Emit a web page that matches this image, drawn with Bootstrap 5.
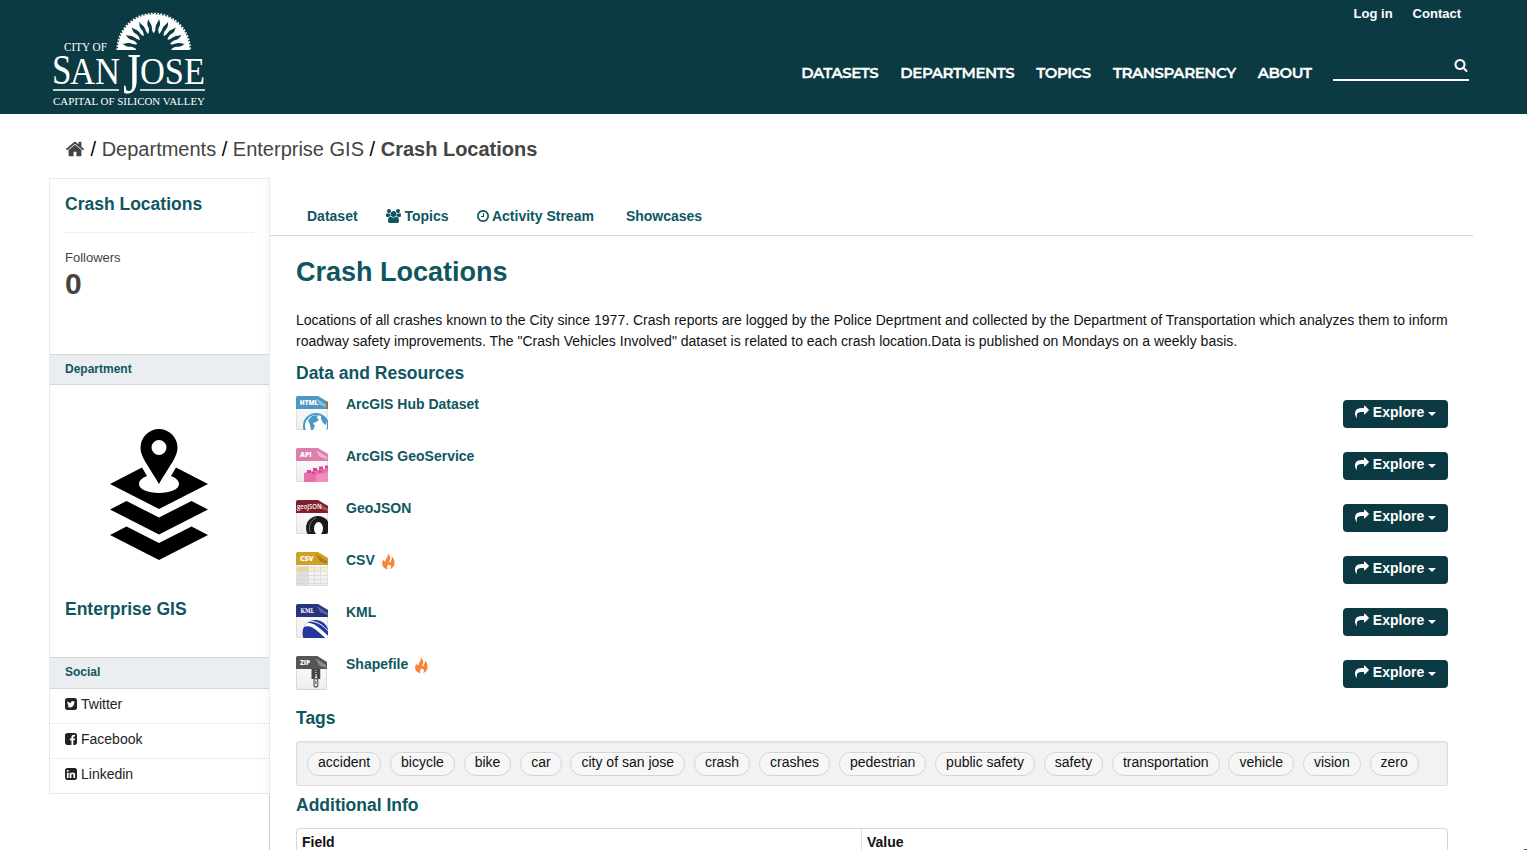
<!DOCTYPE html>
<html lang="en">
<head>
<meta charset="utf-8">
<title>Crash Locations - City of San Jose</title>
<link href="https://cdn.jsdelivr.net/npm/bootstrap@5.3.0/dist/css/bootstrap.min.css" rel="stylesheet">
<style>
:root{--deep:#0b3a42;--teal:#0f5661;--edge:#d5d5d5}
body{font-family:"Liberation Sans",Arial,sans-serif;font-size:14px;line-height:21px;color:#111;height:850px;overflow:hidden;background:#fff}
a{color:inherit;text-decoration:none}
.fa{height:1em;width:auto;fill:currentColor;vertical-align:-.13em}
.masthead{background:var(--deep);height:114px;color:#fff}
.wrap{width:1424px;margin-left:49px}
.logo{margin:8px 0 0 3px}
.account{font-size:13px;line-height:16px;font-weight:700;gap:20px;padding:6px 12px 0 0}
.mainnav{font-family:Montserrat,Inter,sans-serif;font-weight:600;font-size:15px;line-height:20px;gap:22px;margin-top:41px;padding-right:4px;letter-spacing:-.43px;-webkit-text-stroke:.3px #fff}
.searchline{width:136px;height:22px;border-bottom:2px solid #fff;font-size:15px;line-height:15px;margin:-4px 0 0 -.5px;padding-right:1px}
.searchline .fa{height:14px;display:block;margin:-1px 0 0 auto}
.crumbs{font-size:20px;line-height:28px;padding:21px 0 0 16px;height:64px;color:#000}
.crumbs a{color:#444}
.side{width:221px}
.sidecard{border:1px solid #eaeaea;height:616px;background:linear-gradient(90deg,#fff 210px,#fafafa)}
.h-teal{color:var(--teal);font-weight:700;font-size:17.5px;line-height:22px;margin:0}
.sidehead{background:#eaeef1;border-top:1px solid var(--edge);border-bottom:1px solid var(--edge);color:var(--teal);font-size:12px;font-weight:700;line-height:16px;padding:6px 15px 0}
.social{height:35px;padding:5px 15px;color:#222;border-bottom:1px dotted #ddd}
.tabs{height:58px;border-bottom:1px solid var(--edge);color:var(--teal);font-weight:700;padding:28px 0 0 37px}
.inner{padding:0 25px 0 26px}
.res{height:52px}
.res .title{font-weight:700;color:var(--teal);margin-left:18px;line-height:20px;margin-top:-1px}
.pic{margin-top:1px;font-family:"Open Sans",sans-serif;font-weight:800}
.explore{background:var(--deep);color:#fff;font-weight:700;font-size:14px;line-height:20px;width:105px;height:28px;padding:2px 0 0;border:0;border-radius:4px;margin-top:5px}
.explore:hover{background:var(--deep);color:#fff}
.caret{display:inline-block;border:4px solid transparent;border-top-color:#fff;border-bottom:0;vertical-align:1px}
.tagbox{height:45px;background:#f2f2f2;border:1px solid #dcdcdc;border-radius:3px;padding:10px;gap:8.85px;box-shadow:inset 0 1px 2px rgba(0,0,0,.05)}
.tagpill{height:24px;line-height:19px;border:1px solid #d4d4d4;border-radius:12px;padding:0 10px;background:#f6f6f6;box-shadow:inset 0 1px 0 #fff}
.info{height:60px;border:1px solid var(--edge);border-radius:4px;font-weight:700;margin-top:12px}
.info>div{padding:3px 5px}
.corner{position:absolute;right:0;bottom:0;width:4px;height:1px;background:linear-gradient(90deg,#ccc,#222)}
</style>
</head>
<body>
<svg width="0" height="0" class="position-absolute">
<defs>
<symbol id="share" viewBox="0 0 1792 1792"><path d="M1792 640q0 26-19 45l-512 512q-19 19-45 19t-45-19-19-45v-256h-224q-98 0-175.500 6t-154 21.500-133 42.500-105.500 69.500-80 101-48.500 138.500-17.500 181q0 55 5 123 0 6 2.500 23.500t2.500 26.500q0 15-8.500 25t-23.500 10q-16 0-28-17-7-9-13-22t-13.500-30-10.500-24q-127-285-127-451 0-199 53-333 162-403 875-403h224v-256q0-26 19-45t45-19 45 19l512 512q19 19 19 45z"/></symbol>
<symbol id="flame" viewBox="0 0 14 17"><path fill="#f9843a" d="M6 0c2.600 1.800 3.700 4.500 2.300 7.300-.5 1-.4 2 .3 2.100 1 .1 1.300-1.200.8-2.600 1.100.5 1.500-1.300 1.200-3.600C13 5.500 14 8.500 13.400 11.500c-.5 2.600-2.400 4.600-4.900 5.200 1.300-1.300 1.500-2.900.6-4.500-.8.5-1.500.4-1.700-.8-1.700 1.500-2.500 3.500-1.300 5.400C3 16.600.6 14.600.2 11.700-.1 9.400.7 7.600 2 6c-.2 1.400.2 2.300 1 2.300C4 8.300 3.800 7 4.500 5.600 5.500 3.600 6.900 2.400 6 0z"/></symbol>
<path id="ray" d="M-2.800-16.500C-2-19.500-.6-21-1.700-24-2.600-26.500-2.300-28.500-.3-32-.4-29 1.700-27.500 1.800-24.500 1.900-21.500 1-20 2.800-16.500z"/>
<linearGradient id="paper" x1="0" y1="0" x2="0" y2="1"><stop offset="0" stop-color="#fff"/><stop offset="1" stop-color="#eee"/></linearGradient>
<clipPath id="sheet"><path d="M0 2q0-2 2-2h20l10 6v26q0 2-2 2H2q-2 0-2-2z"/></clipPath>
<clipPath id="globe"><circle cx="19.500" cy="29" r="13"/></clipPath>
</defs>
</svg>

<header class="masthead">
 <div class="wrap d-flex justify-content-between">
  <a href="#" class="logo"><svg width="156" height="100" viewBox="52 8 156 100" fill="#fff" font-family="Liberation Serif,serif" class="d-block">
   <path d="M117.700 50a36 36 0 0 1 72 0z"/>
   <path d="M117.200 50a36.500 36.500 0 0 1 73 0" fill="none" stroke="#fff" stroke-width="1.600" stroke-dasharray="1.800 1.400"/>
   <g fill="#0b3a42"><path d="M135.700 51a18 18 0 0 1 36 0z"/>
   <g transform="translate(153.700 50.500)">
   <use href="#ray" transform="rotate(-77)"/><use href="#ray" transform="rotate(-60)"/><use href="#ray" transform="rotate(-43)"/><use href="#ray" transform="rotate(-26)"/><use href="#ray" transform="rotate(-9)"/><use href="#ray" transform="rotate(9) scale(-1 1)"/><use href="#ray" transform="rotate(26) scale(-1 1)"/><use href="#ray" transform="rotate(43) scale(-1 1)"/><use href="#ray" transform="rotate(60) scale(-1 1)"/><use href="#ray" transform="rotate(77) scale(-1 1)"/></g></g>
   <text x="64" y="51" font-size="11.500" textLength="43" lengthAdjust="spacingAndGlyphs">CITY OF</text>
   <text x="52" y="83.700" font-size="43" textLength="19.500" lengthAdjust="spacingAndGlyphs">S</text>
   <text x="70" y="83.700" font-size="38" textLength="50" lengthAdjust="spacingAndGlyphs">AN</text>
   <text x="123" y="92.500" font-size="57" textLength="18" lengthAdjust="spacingAndGlyphs">J</text>
   <text x="140" y="83.700" font-size="38" textLength="65" lengthAdjust="spacingAndGlyphs">OSE</text>
   <path d="M53 89.300h66v1.500H53zM140 89.300h65v1.500h-65z"/>
   <text x="53" y="104.700" font-size="11" textLength="152" lengthAdjust="spacingAndGlyphs">CAPITAL OF SILICON VALLEY</text>
  </svg></a>
  <div>
   <div class="account d-flex justify-content-end"><a href="#">Log in</a><a href="#">Contact</a></div>
   <nav class="mainnav d-flex justify-content-end"><a href="#">DATASETS</a><a href="#">DEPARTMENTS</a><a href="#">TOPICS</a><a href="#">TRANSPARENCY</a><a href="#">ABOUT</a>
    <div class="searchline"><svg class="fa" viewBox="0 0 1792 1792"><path d="M1216 832q0-185-131.500-316.500t-316.500-131.500-316.500 131.500-131.500 316.500 131.500 316.500 316.500 131.500 316.500-131.500 131.500-316.500zm512 832q0 52-38 90t-90 38q-54 0-90-38l-343-342q-179 124-399 124-143 0-273.500-55.500t-225-150-150-225-55.500-273.500 55.500-273.500 150-225 225-150 273.500-55.500 273.500 55.500 225 150 150 225 55.500 273.500q0 220-124 399l343 343q37 37 37 90z"/></svg></div>
   </nav>
  </div>
 </div>
</header>

<div class="wrap">
 <div class="crumbs"><a href="#"><svg class="fa" viewBox="0 0 1792 1792"><path d="M1472 992v480q0 26-19 45t-45 19h-384v-384h-256v384h-384q-26 0-45-19t-19-45v-480q0-1 .5-3t.5-3l575-474 575 474q1 2 1 6zm223-69l-62 74q-8 9-21 11h-3q-13 0-21-7l-692-577-692 577q-12 8-24 7-13-2-21-11l-62-74q-8-10-7-23.500t11-21.500l719-599q32-26 76-26t76 26l244 204v-195q0-14 9-23t23-9h192q14 0 23 9t9 23v408l219 182q10 8 11 21.500t-7 23.500z"/></svg></a> / <a href="#">Departments</a> / <a href="#">Enterprise GIS</a> / <a href="#" class="fw-bold">Crash Locations</a></div>
 <div class="d-flex">
  <aside class="side d-flex flex-column">
   <div class="sidecard flex-shrink-0">
    <div style="height:175px" class="px-3"><div style="margin:0 -1px">
     <h2 class="h-teal" style="padding:14px 0 17px;border-bottom:1px dotted #ddd">Crash Locations</h2>
     <div style="font-size:13px;line-height:18px;color:#444;margin-top:16px">Followers</div>
     <div style="font-size:30px;line-height:34px;color:#444;font-weight:700">0</div></div>
    </div>
    <div class="sidehead" style="height:31px">Department</div>
    <div style="height:272px" class="d-flex flex-column">
     <svg width="98" height="131" viewBox="0 0 98 131" style="margin:44px 0 0 60px"><path fill-rule="evenodd" d="M49 0a18.500 18.500 0 0 1 18.500 18.500C67.500 28 60 36 49 55 38 36 30.500 28 30.500 18.500A18.500 18.500 0 0 1 49 0zm0 11a7.500 7.500 0 1 0 0 15 7.500 7.500 0 0 0 0-15z"/><path d="M32 38.500 0 55l49 25 49-25-32-16.500-5 8.500c5 2 8 4.500 8 8 0 5.500-9 9-20 9s-20-3.500-20-9c0-3.500 3-6 8-8z"/><path d="M0 80.500 16.500 72 49 88.500 81.500 72 98 80.500l-49 25z"/><path d="M0 106 16.500 97.500 49 114l32.500-16.500L98 106l-49 25z"/></svg>
     <h2 class="h-teal" style="margin:38px 0 0 15px">Enterprise GIS</h2>
    </div>
    <div class="sidehead" style="height:32px">Social</div>
    <div class="social"><svg class="fa" viewBox="128 0 1664 1792"><path d="M1408 610q-56 25-121 34 68-40 93-117-65 38-134 51-61-66-153-66-87 0-148.500 61.500t-61.500 148.500q0 29 5 48-129-7-242-65t-192-155q-29 50-29 106 0 114 91 175-47-1-100-26v2q0 75 50 133.500t123 72.500q-29 8-51 8-13 0-39-4 21 63 74.500 104t121.500 42q-116 90-261 90-26 0-50-3 148 94 322 94 112 0 210-35.500t168-95 120.500-137 75-162 24.500-168.500q0-18-1-27 63-45 105-109zm256-194v960q0 119-84.500 203.500t-203.500 84.500h-960q-119 0-203.500-84.500t-84.500-203.500v-960q0-119 84.500-203.500t203.500-84.500h960q119 0 203.500 84.500t84.500 203.500z"/></svg><span style="margin-left:3px">Twitter</span></div>
    <div class="social"><svg class="fa" viewBox="128 0 1664 1792"><path d="M1376 128q119 0 203.500 84.500t84.500 203.500v960q0 119-84.500 203.500t-203.500 84.500h-188v-595h199l30-232h-229v-148q0-56 23.500-84t91.500-28l122-1v-207q-63-9-178-9-136 0-217.500 80t-81.500 226v171h-200v232h200v595h-532q-119 0-203.500-84.500t-84.500-203.500v-960q0-119 84.500-203.500t203.500-84.500h960z"/></svg><span style="margin-left:3px">Facebook</span></div>
    <div class="social border-0"><svg class="fa" viewBox="128 0 1664 1792"><path d="M365 1414h231v-694h-231v694zm246-908q-1-52-36-86t-93-34-94.500 34-36.500 86q0 51 35.500 85.500t92.500 34.500h1q59 0 95-34.500t36-85.500zm585 908h231v-398q0-154-73-233t-193-79q-136 0-209 117h2v-101h-231q3 66 0 694h231v-388q0-38 7-56 15-35 45-59.500t74-24.500q116 0 116 157v371zm468-998v960q0 119-84.500 203.500t-203.500 84.500h-960q-119 0-203.500-84.500t-84.500-203.500v-960q0-119 84.500-203.500t203.500-84.500h960q119 0 203.500 84.500t84.500 203.500z"/></svg><span style="margin-left:3px">Linkedin</span></div>
   </div>
   <div class="flex-grow-1 border-end" style="border-color:#ccc!important"></div>
  </aside>
  <main class="flex-grow-1">
   <nav class="tabs d-flex">
    <a href="#">Dataset</a>
    <a href="#" style="margin-left:28px"><svg class="fa" viewBox="-64 0 1920 1792"><path d="M529 896q-162 5-265 128h-134q-82 0-138-40.500t-56-118.500q0-353 124-353 6 0 43.500 21t97.500 42.500 119 21.500q67 0 133-23-5 37-5 66 0 139 81 256zm1071 637q0 120-73 189.500t-194 69.500h-874q-121 0-194-69.500t-73-189.500q0-53 3.500-103.500t14-109 26.500-108.500 43-97.500 62-81 85.500-53.500 111.500-20q10 0 43 21.500t73 48 107 48 135 21.500 135-21.500 107-48 73-48 43-21.500q61 0 111.500 20t85.500 53.500 62 81 43 97.500 26.500 108.500 14 109 3.500 103.500zm-1024-1277q0 106-75 181t-181 75-181-75-75-181 75-181 181-75 181 75 75 181zm704 384q0 159-112.500 271.500t-271.500 112.500-271.500-112.500-112.500-271.500 112.500-271.500 271.500-112.500 271.500 112.500 112.500 271.500zm576 225q0 78-56 118.500t-138 40.500h-134q-103-123-265-128 81-117 81-256 0-29-5-66 66 23 133 23 59 0 119-21.500t97.500-42.500 43.500-21q124 0 124 353zm-128-609q0 106-75 181t-181 75-181-75-75-181 75-181 181-75 181 75 75 181z"/></svg> Topics</a>
    <a href="#" style="margin-left:28px"><svg class="fa" viewBox="128 0 1536 1792"><path d="M1024 544v448q0 14-9 23t-23 9h-320q-14 0-23-9t-9-23v-64q0-14 9-23t23-9h224v-352q0-14 9-23t23-9h64q14 0 23 9t9 23zm416 352q0-148-73-273t-198-198-273-73-273 73-198 198-73 273 73 273 198 198 273 73 273-73 198-198 73-273zm224 0q0 209-103 385.500t-279.500 279.500-385.500 103-385.500-103-279.500-279.500-103-385.500 103-385.500 279.500-279.500 385.500-103 385.500 103 279.500 279.500 103 385.500z"/></svg> Activity Stream</a>
    <a href="#" style="margin-left:32px">Showcases</a>
   </nav>
   <div class="inner">
    <h1 class="h-teal" style="font-size:27px;line-height:36px;padding-top:18px;height:74px">Crash Locations</h1>
    <p class="m-0 text-nowrap">Locations of all crashes known to the City since 1977. Crash reports are logged by the Police Deprtment and collected by the Department of Transportation which analyzes them to inform<br>roadway safety improvements. The "Crash Vehicles Involved" dataset is related to each crash location.Data is published on Mondays on a weekly basis.</p>
    <h2 class="h-teal" style="padding-top:10px;height:43px">Data and Resources</h2>
    <div>
     <div class="res d-flex align-items-start"><svg width="32" height="35" class="pic" fill="#fff"><g clip-path="url(#sheet)"><rect width="32" height="34" fill="url(#paper)" stroke="#ccc"/><path fill="#4a99c5" d="M0 0h32v13H0z"/><path fill="#9b7033" d="M30 0h2v13h-2z"/><path fill="#8cc0dc" d="m20 2 10 7v3c-2-3-5-2-7-4z"/><circle cx="20" cy="30" r="12" fill="#fff" stroke="#4a99c5" stroke-width="2"/><path fill="#4a99c5" d="m12 24 4-4 6-1-1 3 2 2-3 2-3 1 2 3-2 4h-2l-1-5zM25 18l5 4v7l-3-2-2-4z"/></g><text x="3.800" y="9.200" font-size="6.500" textLength="18.500" lengthAdjust="spacingAndGlyphs">HTML</text></svg><a href="#" class="title">ArcGIS Hub Dataset</a></div>
     <div class="res d-flex align-items-start"><svg width="32" height="35" class="pic" fill="#fff"><g clip-path="url(#sheet)"><rect width="32" height="34" fill="url(#paper)" stroke="#ccc"/><path fill="#dd7fae" d="M0 0h32v13H0z"/><path fill="#efb7d2" d="m20 2 11 7v3c-2-3-6-2-8-4z"/><path fill="#e86fac" d="m8 25 12-3 12-2v14H8z"/><path fill="#cf4a91" d="M11 22h4v3h-4zm6-2h4v3h-4zm6-1.500h4v3h-4zm6-1h3v3h-3zM16 24h3v2h-3zm7-1.500h3v2h-3z"/><path fill="#f08dbd" d="M20 27l12-3v10H20z"/></g><text x="4" y="9.200" font-size="6.500" textLength="11.500" lengthAdjust="spacingAndGlyphs">API</text></svg><a href="#" class="title">ArcGIS GeoService</a></div>
     <div class="res d-flex align-items-start"><svg width="32" height="35" class="pic" fill="#fff" style="font-weight:600"><g clip-path="url(#sheet)"><rect width="32" height="34" fill="url(#paper)" stroke="#ccc"/><path fill="#7e2029" d="M0 0h32v13H0z"/><path fill="#a7525a" d="m21 2 11 7v3c-2-3-6-2-8-4z"/><circle cx="22" cy="28" r="12" fill="#1a1a1a"/><ellipse cx="22.500" cy="28.500" rx="4.500" ry="6.500" fill="#fff"/><path d="M14 32c-2-6 1-12 6-14" fill="none" stroke="#777"/></g><text x="1" y="9.200" font-size="7" textLength="24.500" lengthAdjust="spacingAndGlyphs">geoJSON</text></svg><a href="#" class="title">GeoJSON</a></div>
     <div class="res d-flex align-items-start"><svg width="32" height="35" class="pic" fill="#fff"><g clip-path="url(#sheet)"><rect width="32" height="34" fill="url(#paper)" stroke="#ccc"/><path fill="#d0a126" d="M0 0h32v13H0z"/><path fill="#a98119" d="m20 2 11 7v3c-3-2-6-1-8-4z"/><path fill="#dedede" d="M1 14h11v20H1z"/><path fill="#f3d489" d="M1 16h11v3H1z"/><path fill="#f8ecc8" d="M12 16h20v3H12z"/><path d="M1 15.500h30M1 19.500h30M1 23.500h30M1 27.500h30M1 31.500h30M12.500 14v20M18.500 14v20M24.500 14v20" stroke="#d6d6d6" stroke-width=".7"/></g><text x="4" y="9.200" font-size="6.500" textLength="13.500" lengthAdjust="spacingAndGlyphs">CSV</text></svg><a href="#" class="title">CSV</a><svg width="13" height="17" style="margin:2px 0 0 7px"><use href="#flame"/></svg></div>
     <div class="res d-flex align-items-start"><svg width="32" height="35" class="pic" fill="#fff"><g clip-path="url(#sheet)"><rect width="32" height="34" fill="url(#paper)" stroke="#ccc"/><path fill="#293480" d="M0 0h32v13H0z"/><path fill="#5963a8" d="m21 2 11 7v3c-2-3-6-2-8-4z"/><circle cx="19.500" cy="29" r="13" fill="#2438a0"/><g clip-path="url(#globe)" fill="none" stroke="#fff"><path d="M6 22c9-5 15 2 27 13" stroke-width="3.500"/><path d="M12 17c9 0 15 4 21 11" stroke-width="1"/></g></g><text x="4.500" y="9.200" font-size="6.500" textLength="13.500" lengthAdjust="spacingAndGlyphs" font-family="DejaVu Serif,serif">KML</text></svg><a href="#" class="title">KML</a></div>
     <div class="res d-flex align-items-start"><svg width="32" height="35" class="pic" fill="#fff"><g clip-path="url(#sheet)" transform="scale(.97 1)"><rect width="32" height="34" fill="url(#paper)" stroke="#bbb"/><path fill="#555" d="M0 0h32v13H0z"/><path fill="#8a8a8a" d="m20 2 11 7v3c-3-2-6-1-8-4z"/><path fill="#444" d="M16 13h9v10h-3l-1-5-2 5h-3z"/><path d="M20.500 14v8" stroke="#bbb" stroke-width="1.500" stroke-dasharray="1 1"/><rect x="18.500" y="22.500" width="4" height="8.500" rx="2" fill="#ddd" stroke="#666" stroke-width="1.300"/><path d="M20.500 25v3" stroke="#555"/></g><text x="4" y="9.200" font-size="6.500" textLength="10" lengthAdjust="spacingAndGlyphs">ZIP</text></svg><a href="#" class="title">Shapefile</a><svg width="13" height="17" style="margin:2px 0 0 6.500px"><use href="#flame"/></svg></div>
    </div>
    <h2 class="h-teal" style="height:34px">Tags</h2>
    <div class="tagbox d-flex" id="tags"></div>
    <h2 class="h-teal" style="padding-top:8px">Additional Info</h2>
    <div class="info d-flex"><div style="width:565px" class="border-end">Field</div><div>Value</div></div>
   </div>
  </main>
 </div>
</div>
<div class="corner"></div>
<script src="https://cdn.jsdelivr.net/npm/bootstrap@5.3.0/dist/js/bootstrap.bundle.min.js"></script>
<script>
document.querySelectorAll('.res').forEach(r => r.insertAdjacentHTML('beforeend',
 '<button class="btn explore ms-auto d-flex justify-content-center"><svg class="fa" style="margin:3px 4px 0 0" viewBox="0 0 1792 1792"><use href="#share"/></svg>Explore<span class="caret" style="margin:10px 0 0 4px"></span></button>'));
document.getElementById('tags').innerHTML = ['accident','bicycle','bike','car','city of san jose','crash','crashes','pedestrian','public safety','safety','transportation','vehicle','vision','zero']
 .map(t => `<a href="#" class="tagpill">${t}</a>`).join('');
</script>
</body>
</html>
